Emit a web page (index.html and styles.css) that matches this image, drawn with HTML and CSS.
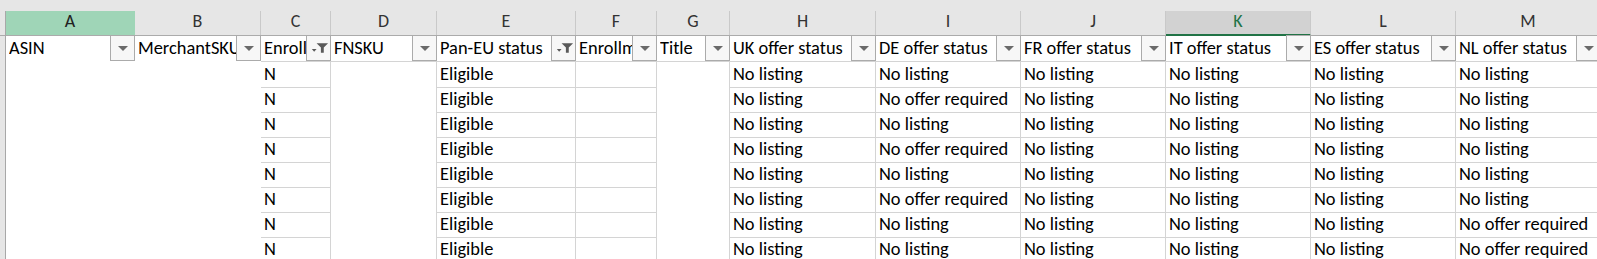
FILE: index.html
```html
<!DOCTYPE html>
<html lang="en">
<head>
  <meta charset="UTF-8" />
  <title>Pan-EU offers</title>
  <link rel="stylesheet" href="styles.css">
</head>
<body>

<div class="topbar"></div>

<div class="sheet">
  <!-- column letters -->
  <div class="row heads">
    <div class="corner"></div>
    <div class="colhead hover">A</div>
    <div class="colhead">B</div>
    <div class="colhead">C</div>
    <div class="colhead">D</div>
    <div class="colhead">E</div>
    <div class="colhead">F</div>
    <div class="colhead">G</div>
    <div class="colhead">H</div>
    <div class="colhead">I</div>
    <div class="colhead">J</div>
    <div class="colhead selected">K</div>
    <div class="colhead">L</div>
    <div class="colhead">M</div>
  </div>

  <!-- filter row -->
  <div class="row filters">
    <div class="rowhead"></div>
    <div class="cell filter nobottom"><span class="label">ASIN</span><button class="drop"></button></div>
    <div class="cell filter nobottom"><span class="label">MerchantSKU</span><button class="drop"></button></div>
    <div class="cell filter"><span class="label">Enrolled</span><button class="drop on">
      <svg width="24" height="24" viewBox="0 0 24 24"><path d="M10 7h12l-4.5 4.5v5.5h-3v-5.5z" fill="#5a5a5a"/><path d="M5 13h5l-2.5 3z" fill="#5a5a5a"/></svg>
    </button></div>
    <div class="cell filter"><span class="label">FNSKU</span><button class="drop"></button></div>
    <div class="cell filter"><span class="label">Pan-EU status</span><button class="drop on">
      <svg width="24" height="24" viewBox="0 0 24 24"><path d="M10 7h12l-4.5 4.5v5.5h-3v-5.5z" fill="#5a5a5a"/><path d="M5 13h5l-2.5 3z" fill="#5a5a5a"/></svg>
    </button></div>
    <div class="cell filter"><span class="label">Enrollment</span><button class="drop"></button></div>
    <div class="cell filter"><span class="label">Title</span><button class="drop"></button></div>
    <div class="cell filter"><span class="label">UK offer status</span><button class="drop"></button></div>
    <div class="cell filter"><span class="label">DE offer status</span><button class="drop"></button></div>
    <div class="cell filter"><span class="label">FR offer status</span><button class="drop"></button></div>
    <div class="cell filter"><span class="label">IT offer status</span><button class="drop"></button></div>
    <div class="cell filter"><span class="label">ES offer status</span><button class="drop"></button></div>
    <div class="cell filter"><span class="label">NL offer status</span><button class="drop"></button></div>
  </div>

  <div class="row">
    <div class="rowhead"></div>
    <div class="cell hidden"></div><div class="cell hidden"></div>
    <div class="cell">N</div><div class="cell masked"></div>
    <div class="cell">Eligible</div><div class="cell"></div><div class="cell masked"></div>
    <div class="cell">No listing</div><div class="cell">No listing</div><div class="cell">No listing</div>
    <div class="cell">No listing</div><div class="cell">No listing</div><div class="cell">No listing</div>
  </div>
  <div class="row">
    <div class="rowhead"></div>
    <div class="cell hidden"></div><div class="cell hidden"></div>
    <div class="cell">N</div><div class="cell masked"></div>
    <div class="cell">Eligible</div><div class="cell"></div><div class="cell masked"></div>
    <div class="cell">No listing</div><div class="cell">No offer required</div><div class="cell">No listing</div>
    <div class="cell">No listing</div><div class="cell">No listing</div><div class="cell">No listing</div>
  </div>
  <div class="row">
    <div class="rowhead"></div>
    <div class="cell hidden"></div><div class="cell hidden"></div>
    <div class="cell">N</div><div class="cell masked"></div>
    <div class="cell">Eligible</div><div class="cell"></div><div class="cell masked"></div>
    <div class="cell">No listing</div><div class="cell">No listing</div><div class="cell">No listing</div>
    <div class="cell">No listing</div><div class="cell">No listing</div><div class="cell">No listing</div>
  </div>
  <div class="row">
    <div class="rowhead"></div>
    <div class="cell hidden"></div><div class="cell hidden"></div>
    <div class="cell">N</div><div class="cell masked"></div>
    <div class="cell">Eligible</div><div class="cell"></div><div class="cell masked"></div>
    <div class="cell">No listing</div><div class="cell">No offer required</div><div class="cell">No listing</div>
    <div class="cell">No listing</div><div class="cell">No listing</div><div class="cell">No listing</div>
  </div>
  <div class="row">
    <div class="rowhead"></div>
    <div class="cell hidden"></div><div class="cell hidden"></div>
    <div class="cell">N</div><div class="cell masked"></div>
    <div class="cell">Eligible</div><div class="cell"></div><div class="cell masked"></div>
    <div class="cell">No listing</div><div class="cell">No listing</div><div class="cell">No listing</div>
    <div class="cell">No listing</div><div class="cell">No listing</div><div class="cell">No listing</div>
  </div>
  <div class="row">
    <div class="rowhead"></div>
    <div class="cell hidden"></div><div class="cell hidden"></div>
    <div class="cell">N</div><div class="cell masked"></div>
    <div class="cell">Eligible</div><div class="cell"></div><div class="cell masked"></div>
    <div class="cell">No listing</div><div class="cell">No offer required</div><div class="cell">No listing</div>
    <div class="cell">No listing</div><div class="cell">No listing</div><div class="cell">No listing</div>
  </div>
  <div class="row">
    <div class="rowhead"></div>
    <div class="cell hidden"></div><div class="cell hidden"></div>
    <div class="cell">N</div><div class="cell masked"></div>
    <div class="cell">Eligible</div><div class="cell"></div><div class="cell masked"></div>
    <div class="cell">No listing</div><div class="cell">No listing</div><div class="cell">No listing</div>
    <div class="cell">No listing</div><div class="cell">No listing</div><div class="cell">No offer required</div>
  </div>
  <div class="row">
    <div class="rowhead"></div>
    <div class="cell hidden"></div><div class="cell hidden"></div>
    <div class="cell">N</div><div class="cell masked"></div>
    <div class="cell">Eligible</div><div class="cell"></div><div class="cell masked"></div>
    <div class="cell">No listing</div><div class="cell">No listing</div><div class="cell">No listing</div>
    <div class="cell">No listing</div><div class="cell">No listing</div><div class="cell">No offer required</div>
  </div>
</div>

</body>
</html>
```

FILE: styles.css
```css
body {
  margin: 0;
  overflow: hidden;
  background: #ffffff;
  font-family: Carlito, Lato, 'Liberation Sans', sans-serif;
  font-size: 18.4px;
  color: #000;
}

.topbar {
  height: 11px;
  background: #e6e6e6;
}

.sheet {
  width: 1610px;
}

.row {
  display: grid;
  grid-template-columns: 6px 129px 126px 70px 106px 139px 81px 73px 146px 145px 145px 145px 145px 145px;
  height: 25px;
}

/* column letters */
.corner {
  background: #e6e6e6;
  border-right: 1px solid #a8a8a8;
  border-bottom: 1px solid #ababab;
  box-sizing: border-box;
}

.colhead {
  box-sizing: border-box;
  background: #e6e6e6;
  border-right: 1px solid #c9c9c9;
  border-bottom: 1px solid #ababab;
  color: #333;
  text-align: center;
  font-size: 18px;
  line-height: 21px;
}

.colhead.hover {
  background: #9fd5b7;
  color: #222;
  border-right-color: #9fd5b7;
}

.colhead.selected {
  background: #d2d2d2;
  color: #217346;
  border-bottom: 2px solid #217346;
}

/* row headers */
.rowhead {
  box-sizing: border-box;
  background: #e6e6e6;
  border-right: 1px solid #a8a8a8;
  border-bottom: 1px solid #c4c4c4;
}

/* cells */
.cell {
  box-sizing: border-box;
  border-right: 1px solid #d4d4d4;
  border-bottom: 1px solid #d4d4d4;
  padding: 0 0 0 3px;
  white-space: nowrap;
  line-height: 26px;
}

.cell.hidden {
  border-color: #fff;
}

.cell.masked {
  border-bottom-color: #fff;
}

.filter {
  display: flex;
  padding-right: 0;
  line-height: 24px;
}

.filter.nobottom {
  border-bottom-color: #fff;
}

.label {
  flex: 1;
  overflow: hidden;
  min-width: 0;
}

.drop {
  flex: none;
  width: 25px;
  height: 26px;
  margin: -1px -1px 0 0;
  padding: 0;
  border: 1px solid #ababab;
  background: #f7f7f7;
  display: flex;
  align-items: center;
  justify-content: center;
}

.drop::after {
  content: "";
  border-left: 5px solid transparent;
  border-right: 5px solid transparent;
  border-top: 5px solid #6a6a6a;
}

.drop.on::after {
  display: none;
}
```
